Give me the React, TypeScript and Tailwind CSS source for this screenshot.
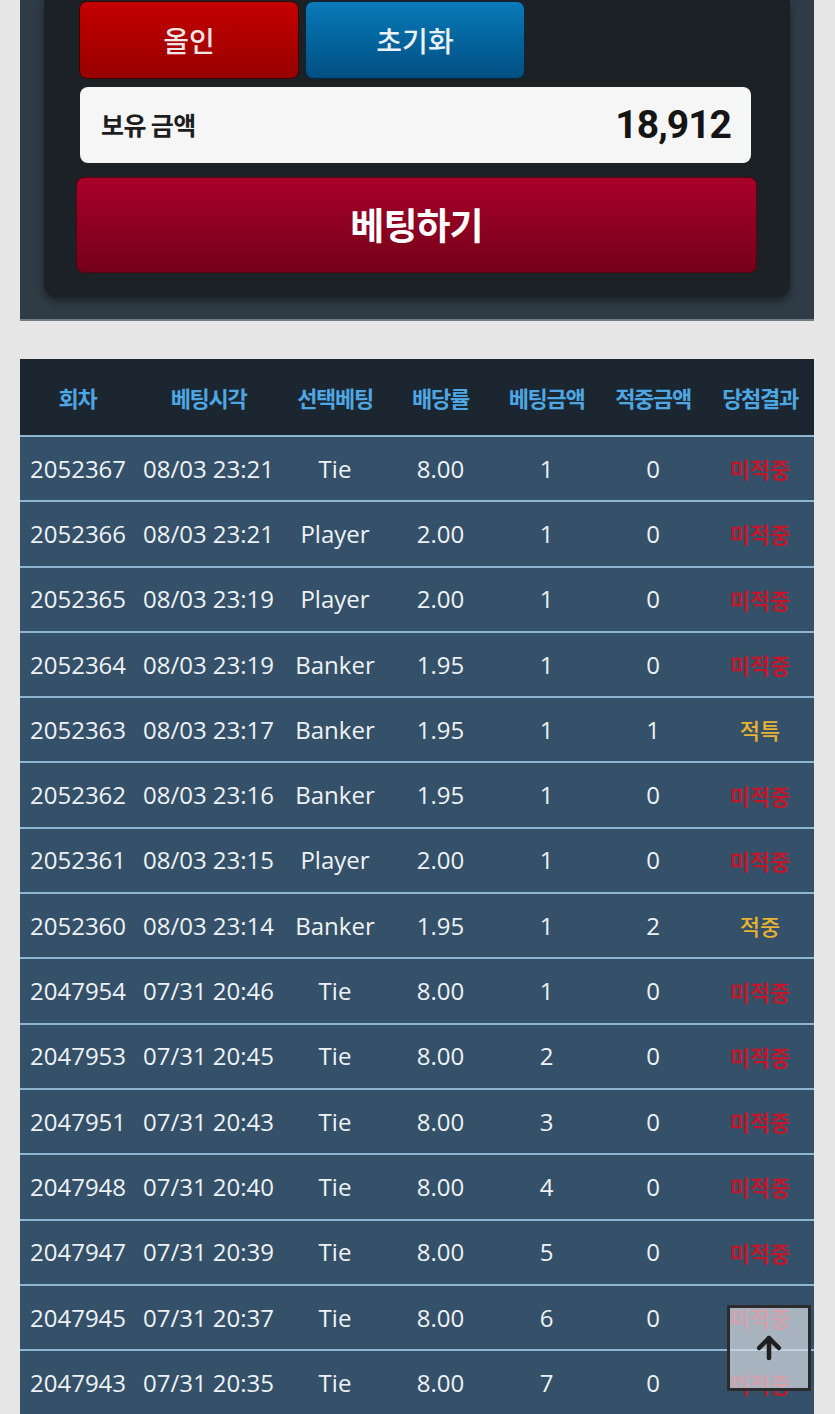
import { ArrowUp } from "lucide-react";

type Row = {
  round: string;
  time: string;
  pick: string;
  odds: string;
  bet: string;
  win: string;
  result: string;
};

const rows: Row[] = [
  { round: "2052367", time: "08/03 23:21", pick: "Tie", odds: "8.00", bet: "1", win: "0", result: "미적중" },
  { round: "2052366", time: "08/03 23:21", pick: "Player", odds: "2.00", bet: "1", win: "0", result: "미적중" },
  { round: "2052365", time: "08/03 23:19", pick: "Player", odds: "2.00", bet: "1", win: "0", result: "미적중" },
  { round: "2052364", time: "08/03 23:19", pick: "Banker", odds: "1.95", bet: "1", win: "0", result: "미적중" },
  { round: "2052363", time: "08/03 23:17", pick: "Banker", odds: "1.95", bet: "1", win: "1", result: "적특" },
  { round: "2052362", time: "08/03 23:16", pick: "Banker", odds: "1.95", bet: "1", win: "0", result: "미적중" },
  { round: "2052361", time: "08/03 23:15", pick: "Player", odds: "2.00", bet: "1", win: "0", result: "미적중" },
  { round: "2052360", time: "08/03 23:14", pick: "Banker", odds: "1.95", bet: "1", win: "2", result: "적중" },
  { round: "2047954", time: "07/31 20:46", pick: "Tie", odds: "8.00", bet: "1", win: "0", result: "미적중" },
  { round: "2047953", time: "07/31 20:45", pick: "Tie", odds: "8.00", bet: "2", win: "0", result: "미적중" },
  { round: "2047951", time: "07/31 20:43", pick: "Tie", odds: "8.00", bet: "3", win: "0", result: "미적중" },
  { round: "2047948", time: "07/31 20:40", pick: "Tie", odds: "8.00", bet: "4", win: "0", result: "미적중" },
  { round: "2047947", time: "07/31 20:39", pick: "Tie", odds: "8.00", bet: "5", win: "0", result: "미적중" },
  { round: "2047945", time: "07/31 20:37", pick: "Tie", odds: "8.00", bet: "6", win: "0", result: "미적중" },
  { round: "2047943", time: "07/31 20:35", pick: "Tie", odds: "8.00", bet: "7", win: "0", result: "미적중" },
];

const headers = ["회차", "베팅시각", "선택베팅", "배당률", "베팅금액", "적중금액", "당첨결과"];

const App = () => {
  return (
    <div className="min-h-screen bg-[#e6e6e6] pb-10 font-['Open_Sans','Noto_Sans_CJK_KR',sans-serif]">
      {/* Bet panel */}
      <div className="ml-5 w-[794px] bg-[#2f3b45] border-b-2 border-[#6f7d87] px-6 pb-[22px]">
        <div className="bg-[#1c2126] rounded-b-xl shadow-[0_4px_8px_rgba(0,0,0,0.4)] pl-[35px] pr-[39px] pt-px pb-6">
          <div className="flex gap-[6px]">
            <button className="w-[220px] h-[78px] rounded-lg border border-[#3a0606] bg-gradient-to-b from-[#c40000] to-[#980000] text-[28px] font-medium text-[#f3e6e6] font-['Noto_Sans_CJK_KR',sans-serif]">
              올인
            </button>
            <button className="w-[220px] h-[78px] rounded-lg border border-[#06243a] bg-gradient-to-b from-[#0a7ab8] to-[#004f82] text-[28px] font-medium text-[#eaf2f8] font-['Noto_Sans_CJK_KR',sans-serif]">
              초기화
            </button>
          </div>

          <div className="mt-2 ml-px h-[76px] rounded-lg bg-[#f6f6f6] flex items-center justify-between pl-[21px] pr-[20px]">
            <span className="text-[25px] font-bold text-[#1d1d1d] tracking-tight font-['Noto_Sans_CJK_KR',sans-serif]">보유 금액</span>
            <span className="text-[39px] font-bold text-[#151515] font-['Roboto',sans-serif] tracking-tight">18,912</span>
          </div>

          <button className="mt-[14px] -ml-[3px] w-[681px] h-[96px] rounded-lg border border-[#55000f] bg-gradient-to-b from-[#a9002a] to-[#740018] text-[37px] font-bold text-white tracking-tight font-['Noto_Sans_CJK_KR',sans-serif]">
            베팅하기
          </button>
        </div>
      </div>

      {/* History table */}
      <table className="ml-5 mt-[38px] w-[794px] table-fixed border-collapse">
        <colgroup>
          <col className="w-[115px]" />
          <col className="w-[147px]" />
          <col className="w-[106px]" />
          <col className="w-[105px]" />
          <col className="w-[107px]" />
          <col className="w-[106px]" />
          <col className="w-[108px]" />
        </colgroup>
        <thead>
          <tr className="h-[77px] bg-[#1b2630]">
            {headers.map((h) => (
              <th
                key={h}
                className="text-[22px] font-bold text-[#4ea6e2] text-center tracking-[-0.06em] font-['Noto_Sans_CJK_KR',sans-serif]"
              >
                {h}
              </th>
            ))}
          </tr>
        </thead>
        <tbody>
          {rows.map((r) => (
            <tr key={r.round} className="h-[65.3px] bg-[#35516a] border-t-2 border-[#8cb6d2] text-[24px] text-[#eef2f5]">
              <td className="pl-[10px] text-left">{r.round}</td>
              <td className="text-center">{r.time}</td>
              <td className="text-center">{r.pick}</td>
              <td className="text-center">{r.odds}</td>
              <td className="text-center">{r.bet}</td>
              <td className="text-center">{r.win}</td>
              <td
                className={
                  r.result === "미적중"
                    ? "text-center text-[22px] font-bold text-[#c0182a] font-['Noto_Sans_CJK_KR',sans-serif]"
                    : "text-center text-[22px] font-medium text-[#e8b232] font-['Noto_Sans_CJK_KR',sans-serif]"
                }
              >
                {r.result}
              </td>
            </tr>
          ))}
        </tbody>
      </table>

      {/* Scroll to top */}
      <button className="fixed right-6 bottom-[23px] w-[84px] h-[86px] border-[3px] border-[#2b2b2b] bg-[#d8dde2]/70 flex items-center justify-center">
        <ArrowUp size={34} strokeWidth={3.2} color="#1f1f1f" />
      </button>
    </div>
  );
};

export default App;
